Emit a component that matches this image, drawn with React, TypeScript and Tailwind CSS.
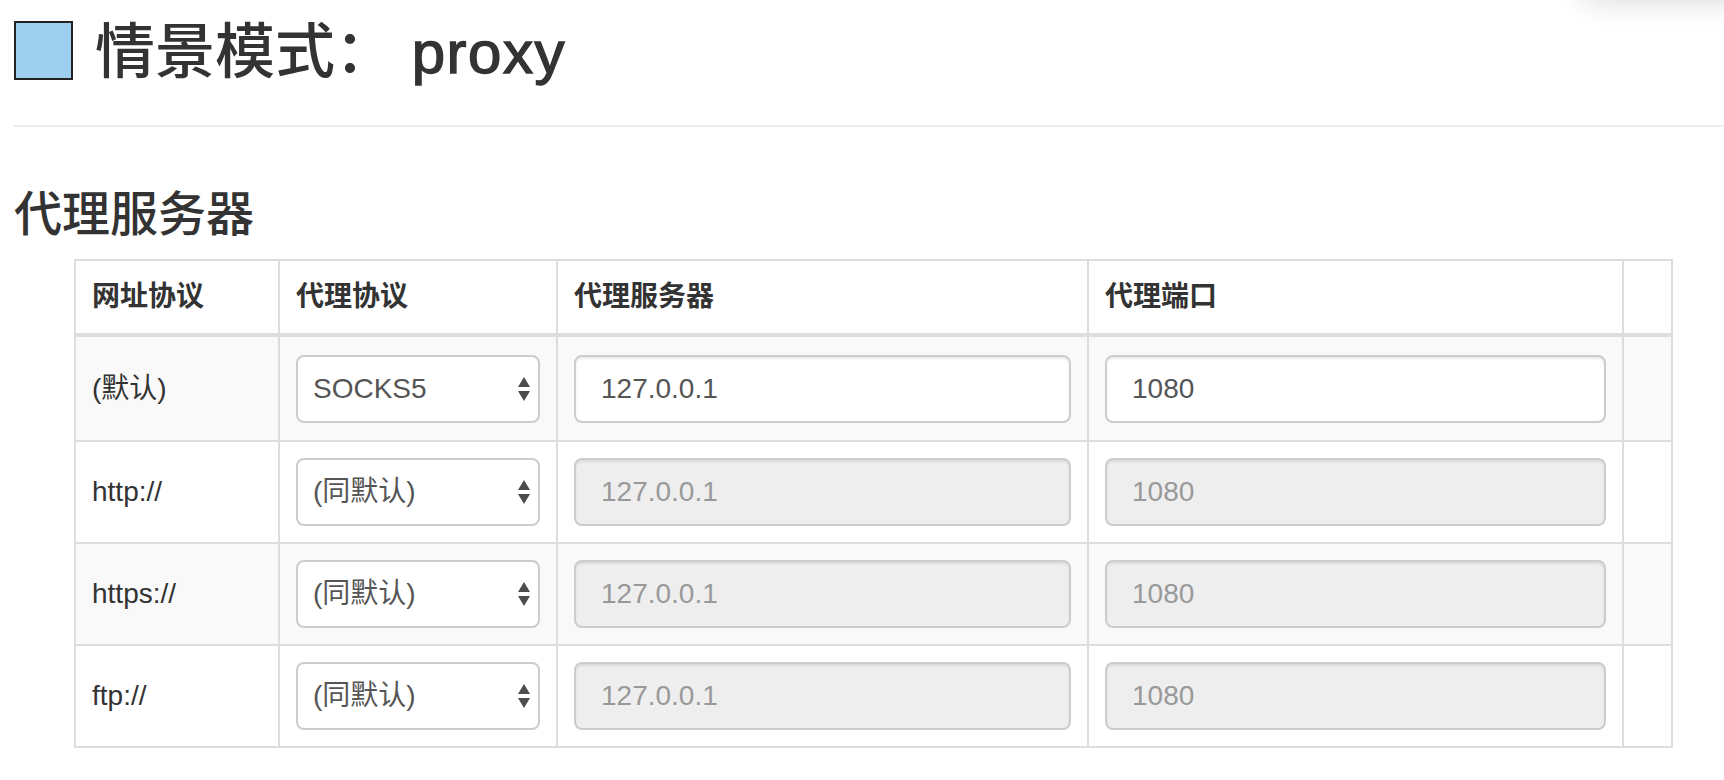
import React from 'react'

type Row = {
	scheme: string
	protocol: string
	host: string
	port: string
	enabled: boolean
}

const rows: Row[] = [
	{ scheme: '(默认)', protocol: 'SOCKS5', host: '127.0.0.1', port: '1080', enabled: true },
	{ scheme: 'http://', protocol: '(同默认)', host: '127.0.0.1', port: '1080', enabled: false },
	{ scheme: 'https://', protocol: '(同默认)', host: '127.0.0.1', port: '1080', enabled: false },
	{ scheme: 'ftp://', protocol: '(同默认)', host: '127.0.0.1', port: '1080', enabled: false },
]

function SelectBox({ value }: { value: string }) {
	return (
		<div className="relative">
			<select
				defaultValue={value}
				className="block w-full h-[68px] appearance-none rounded-[8px] border-2 border-[#ccc] bg-white pl-[15px] pr-[40px] text-[28px] leading-[40px] text-[#555] outline-none"
			>
				<option value={value}>{value}</option>
			</select>
			<svg
				className="pointer-events-none absolute right-[9px] top-1/2 -translate-y-1/2"
				width="14"
				height="28"
				viewBox="0 0 14 28"
			>
				<polygon points="7,2 13,12 1,12" fill="#4d4d4d" />
				<polygon points="1,16 13,16 7,26" fill="#4d4d4d" />
			</svg>
		</div>
	)
}

function TextBox({ value, enabled }: { value: string; enabled: boolean }) {
	return (
		<input
			type="text"
			readOnly
			defaultValue={value}
			className={
				enabled
					? 'block w-full h-[68px] rounded-[8px] border-2 border-[#ccc] bg-white pl-[25px] text-[28px] leading-[40px] text-[#555] shadow-[inset_0_2px_2px_rgba(0,0,0,0.075)] outline-none'
					: 'block w-full h-[68px] rounded-[8px] border-2 border-[#ccc] bg-[#eee] pl-[25px] text-[28px] leading-[40px] text-[#999] shadow-[inset_0_2px_2px_rgba(0,0,0,0.075)] outline-none'
			}
		/>
	)
}

export default function App() {
	return (
		<div className="relative h-[780px] w-full overflow-hidden bg-white text-[#333] font-['Liberation_Sans','Noto_Sans_CJK_SC',sans-serif]">
			{/* faint shadow of something hanging over the top-right corner */}
			<div className="pointer-events-none absolute -top-[62px] -right-[40px] h-[60px] w-[190px] rounded-full bg-white shadow-[0_4px_30px_rgba(0,0,0,0.14)]" />

			<div className="ml-[14px]">
				{/* Page header */}
				<div className="flex items-center border-b-2 border-[#eee] pt-[18px] pb-[43px]">
					<span className="h-[59px] w-[59px] shrink-0 border-2 border-[#222] bg-[#9ecfee]" />
					<h1 className="ml-[22px] mt-[5px] text-[60px] leading-[59px] font-medium">
						情景模式：{' '}
						<span className="tracking-[1.5px] [-webkit-text-stroke:1.4px_#333]">proxy</span>
					</h1>
				</div>

				{/* Section */}
				<h3 className="mt-[64px] text-[48px] leading-[48px] font-medium">代理服务器</h3>

				<table className="ml-[60px] mt-[20px] w-[1599px] table-fixed border-collapse border-2 border-[#ddd]">
					<colgroup>
						<col className="w-[204px]" />
						<col className="w-[278px]" />
						<col className="w-[531px]" />
						<col className="w-[535px]" />
						<col />
					</colgroup>
					<thead>
						<tr>
							<th className="border-2 border-b-4 border-[#ddd] px-4 py-4 text-left align-middle text-[28px] leading-[40px] font-bold">网址协议</th>
							<th className="border-2 border-b-4 border-[#ddd] px-4 py-4 text-left align-middle text-[28px] leading-[40px] font-bold">代理协议</th>
							<th className="border-2 border-b-4 border-[#ddd] px-4 py-4 text-left align-middle text-[28px] leading-[40px] font-bold">代理服务器</th>
							<th className="border-2 border-b-4 border-[#ddd] px-4 py-4 text-left align-middle text-[28px] leading-[40px] font-bold">代理端口</th>
							<th className="border-2 border-b-4 border-[#ddd] px-4 py-4" />
						</tr>
					</thead>
					<tbody>
						{rows.map((row, i) => {
							const pad = i === 0 ? 'px-4 pt-[18px] pb-[17px]' : 'px-4 py-4'
							return (
								<tr key={row.scheme} className={i % 2 === 0 ? 'bg-[#f9f9f9]' : 'bg-white'}>
									<td className={`border-2 border-[#ddd] ${pad} align-middle text-[28px] leading-[40px]`}>{row.scheme}</td>
									<td className={`border-2 border-[#ddd] ${pad} align-middle`}>
										<SelectBox value={row.protocol} />
									</td>
									<td className={`border-2 border-[#ddd] ${pad} align-middle`}>
										<TextBox value={row.host} enabled={row.enabled} />
									</td>
									<td className={`border-2 border-[#ddd] ${pad} align-middle`}>
										<TextBox value={row.port} enabled={row.enabled} />
									</td>
									<td className={`border-2 border-[#ddd] ${pad}`} />
								</tr>
							)
						})}
					</tbody>
				</table>
			</div>
		</div>
	)
}
